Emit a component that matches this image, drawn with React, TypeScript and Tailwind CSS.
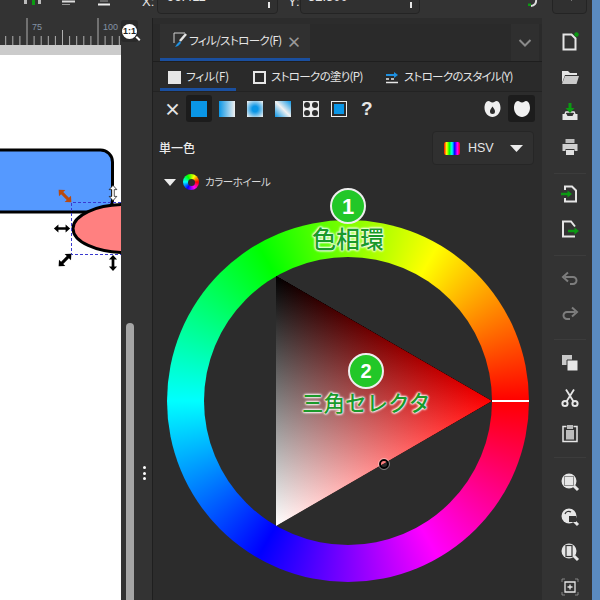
import React from "react";

const W = "#e6e6e6";

function Ico({ children }: { children: React.ReactNode }) {
  return (
    <svg width="20" height="20" viewBox="0 0 20 20" fill="none" stroke={W} strokeWidth="2">
      {children}
    </svg>
  );
}

const G = "#0b9a12";

const group1 = [
  <Ico key="new">
    <path d="M3.500 2.500h8l4 4v11h-12z" />
    <circle cx="16.500" cy="2.500" r="2.200" fill={G} stroke="none" />
  </Ico>,
  <Ico key="open">
    <path d="M2 4h6l2 2h7v2H5L2 16z" fill={W} stroke="none" />
    <path d="M5 9h14l-2.500 8H2z" fill={W} stroke="none" opacity="0.85" />
  </Ico>,
  <Ico key="save">
    <path d="M2.500 12h4l1 2h5l1-2h4v6h-15z" fill={W} stroke="none" />
    <path d="M5 12l1-2h8l1 2" strokeWidth="1.500" />
    <path d="M10 1v8" stroke={G} strokeWidth="3" />
    <path d="M5.500 6h9L10 11z" fill={G} stroke="none" />
  </Ico>,
  <Ico key="print">
    <path d="M5.500 2h9v4h-9z" fill="#bdbdbd" stroke="none" />
    <path d="M2.500 7h15v7h-3v-2h-9v2h-3z" fill="#cfcfcf" stroke="none" />
    <path d="M6 13h8v5H6z" fill="#e0e0e0" stroke="none" />
  </Ico>,
];
const group2 = [
  <Ico key="import">
    <path d="M5 6V2.500h7l4 4v11H5V14" />
    <path d="M1 10h9" stroke={G} strokeWidth="2.500" />
    <path d="M7.500 6.500v7L12 10z" fill={G} stroke="none" />
  </Ico>,
  <Ico key="export">
    <path d="M15 7.500l-4-5H3v15h12" />
    <path d="M8 12h9" stroke={G} strokeWidth="2.500" />
    <path d="M14.500 8.500v7l4.500-3.500z" fill={G} stroke="none" />
  </Ico>,
];
const Gy = "#7d7d7d";
const group3 = [
  <Ico key="undo">
    <path d="M5 8h8a3.500 3.500 0 0 1 0 7h-3" stroke={Gy} />
    <path d="M8 3.500L3 8l5 4.500" stroke={Gy} />
  </Ico>,
  <Ico key="redo">
    <path d="M15 8H7a3.500 3.500 0 0 0 0 7h3" stroke={Gy} />
    <path d="M12 3.500L17 8l-5 4.500" stroke={Gy} />
  </Ico>,
];
const group4 = [
  <Ico key="copy">
    <path d="M2 2h10v10H2z" fill="#c8c8c8" stroke="none" />
    <path d="M7 7h11v11H7z" fill={W} stroke="#333" strokeWidth="1" />
  </Ico>,
  <Ico key="cut">
    <path d="M6 1.500l7.500 12M14 1.500L6.500 13.500" strokeWidth="1.800" />
    <circle cx="5" cy="15.500" r="2.600" />
    <circle cx="15" cy="15.500" r="2.600" />
  </Ico>,
  <Ico key="paste">
    <path d="M6.500 3.500H3v15h14v-15h-3.500" strokeWidth="1.500" />
    <path d="M7 2h6v4H7z" fill="#bbb" stroke="none" />
    <path d="M6 7h8v9.500H6z" fill="#bbb" stroke="none" />
  </Ico>,
];
const Lens = ({ children }: { children?: React.ReactNode }) => (
  <svg width="20" height="20" viewBox="0 0 20 20" fill="none">
    <circle cx="9" cy="9" r="7.500" fill={W} />
    <path d="M14 14l4 4" stroke={W} strokeWidth="3" />
    {children}
  </svg>
);
const group5 = [
  <Lens key="z1">
    <rect x="4.500" y="4.500" width="9" height="9" fill="none" stroke="#333" strokeWidth="1" strokeDasharray="1 1" />
  </Lens>,
  <Lens key="z2">
    <path d="M9 9h7v6H9z" fill="#333" />
    <path d="M5 7a4 4 0 0 1 6-2" stroke="#333" strokeWidth="1.200" />
  </Lens>,
  <Lens key="z3">
    <rect x="6" y="3.500" width="6" height="11" fill={W} stroke="#333" strokeWidth="1.200" />
  </Lens>,
  <Ico key="z4">
    <path d="M5 5h10v10H5z" strokeWidth="1.300" />
    <path d="M10 7.500v5M7.500 10h5" strokeWidth="1.300" />
    <path d="M2 5V2h3M15 2h3v3M18 15v3h-3M5 18H2v-3" strokeWidth="0.800" stroke="#999" />
  </Ico>,
];

function Tool({ children }: { children: React.ReactNode }) {
  return <div className="flex h-[35px] w-full shrink-0 items-center justify-center">{children}</div>;
}

function RightBar() {
  return (
    <div className="flex h-full w-[50px] shrink-0 flex-col items-center overflow-hidden pl-[6px] pt-[6px]">
      {group1.map((g, i) => <Tool key={i}>{g}</Tool>)}
      <div className="mt-[9px] h-px w-[32px] shrink-0 bg-[#3c3c3c]" />
      <div className="mt-[2px]" />
      {group2.map((g, i) => <Tool key={i}>{g}</Tool>)}
      <div className="mt-[9px] h-px w-[32px] shrink-0 bg-[#3c3c3c]" />
      <div className="mt-[5px]" />
      {group3.map((g, i) => <Tool key={i}>{g}</Tool>)}
      <div className="mt-[8px] h-px w-[32px] shrink-0 bg-[#3c3c3c]" />
      <div className="mt-[5px]" />
      {group4.map((g, i) => <Tool key={i}>{g}</Tool>)}
      <div className="mt-[7px] h-px w-[32px] shrink-0 bg-[#3c3c3c]" />
      <div className="mt-[6px]" />
      {group5.map((g, i) => <Tool key={i}>{g}</Tool>)}
    </div>
  );
}

function Ruler() {
  const ticks: number[] = [];
  for (let i = -3; i < 14; i++) ticks.push(27 + i * 7.1);
  return (
    <svg width="121" height="27" viewBox="0 0 121 27" className="block shrink-0">
      {ticks.map((x, i) => {
        const k = i - 3;
        const h = k % 10 === 0 ? 27 : k % 5 === 0 ? 15 : 9;
        return <line key={i} x1={x} x2={x} y1={27 - h} y2={27} stroke="#b0b0b0" strokeWidth="1" />;
      })}
      <text x="32" y="12" fontSize="9" fill="#8494a6" fontFamily="Liberation Sans">75</text>
      <text x="103" y="12" fontSize="9" fill="#8494a6" fontFamily="Liberation Sans">100</text>
    </svg>
  );
}

const ARROW = "M-9 0l5-4.500v3h8v-3l5 4.500-5 4.500v-3h-8v3z";

function CanvasDrawing() {
  return (
    <svg width="121" height="545" viewBox="0 55 121 545" className="block">
      <rect x="-20" y="150" width="132.500" height="62" rx="12" fill="#5599ff" stroke="#000" strokeWidth="3" />
      <ellipse cx="125" cy="228.500" rx="52" ry="24" fill="#ff8080" stroke="#000" strokeWidth="3" />
      <path d="M121 202.500H71.500V254.500H121" fill="none" stroke="#3a3ad0" strokeWidth="1" strokeDasharray="3 2" />
      <path d={ARROW} fill="#b84a10" transform="translate(65 196) rotate(45)" />
      <path d={ARROW} fill="#fff" stroke="#000" strokeWidth="0.800" transform="translate(113 193) rotate(90) scale(0.85)" />
      <path d={ARROW} fill="#000" transform="translate(62 228.500) scale(0.9)" />
      <path d={ARROW} fill="#000" transform="translate(65 260) rotate(-45)" />
      <path d={ARROW} fill="#000" transform="translate(113 263) rotate(90) scale(0.9)" />
    </svg>
  );
}

const Check = ({ filled }: { filled?: boolean }) => (
  <div className={filled ? "h-[13px] w-[13px] shrink-0 bg-[#e6e6e6]" : "h-[13px] w-[13px] shrink-0 border-2 border-[#e6e6e6]"} />
);

function Panel() {
  return (
    <div className="flex h-full w-[390px] shrink-0 flex-col border-l border-[#1f1f1f] bg-[#2c2c2c] pt-[6px] [font-feature-settings:'palt']">
      <div className="flex h-[38px] shrink-0 border-b border-[#1e1e1e] bg-[#2a2a2a] pl-[7px] pr-[3px]">
        <div className="flex w-[150px] items-center border-b-[3px] border-[#1a4f9f] bg-[#303030] pl-[11px] text-[11.500px] text-[#e6e6e6]">
          <svg width="20" height="20" viewBox="0 0 20 20" fill="none" className="mr-[-2px] shrink-0">
            <path d="M3 12V2h11" stroke="#cfcfcf" strokeWidth="1" />
            <path d="M15 3L9 10" stroke="#e6e6e6" strokeWidth="2.500" />
            <path d="M9 10l-3 3-2 3 3-1 3-3z" fill="#1e90e0" />
          </svg>
          <span className="whitespace-nowrap tracking-[-0.6px]">フィル/ストローク(F)</span>
          <span className="ml-[5px] text-[15px] font-bold leading-none text-[#9a9a9a]">×</span>
        </div>
        <div className="flex-1" />
        <div className="flex w-[28px] items-center justify-center bg-[#2f2f2f]">
          <svg width="14" height="10" viewBox="0 0 14 10" fill="none">
            <path d="M1.500 2L7 7.500 12.500 2" stroke="#8a8a8a" strokeWidth="2" />
          </svg>
        </div>
      </div>
      <div className="flex h-[30px] shrink-0 items-stretch border-b border-[#232323] bg-[#2a2a2a] pl-[7px] pt-[4px] text-[11.500px] text-[#e6e6e6]">
        <div className="flex w-[76px] items-center gap-[5px] border-b-[3px] border-[#1a4f9f] pl-[8px]">
          <Check filled />
          <span className="whitespace-nowrap">フィル(F)</span>
        </div>
        <div className="ml-[17px] flex w-[116px] items-center gap-[5px] pb-[3px]">
          <Check />
          <span className="whitespace-nowrap tracking-[-0.7px]">ストロークの塗り(P)</span>
        </div>
        <div className="ml-[16px] flex items-center gap-[5px] pb-[3px]">
          <svg width="14" height="14" viewBox="0 0 14 14" fill="none" className="shrink-0">
            <path d="M1 5h9" stroke="#1e90e0" strokeWidth="2" />
            <path d="M9 2l4 3-4 3z" fill="#1e90e0" />
            <path d="M1 9h3M6 9h3" stroke="#e6e6e6" strokeWidth="1.500" />
            <path d="M1 12.500h12" stroke="#e6e6e6" strokeWidth="1.500" />
          </svg>
          <span className="whitespace-nowrap tracking-[-0.75px]">ストロークのスタイル(Y)</span>
        </div>
      </div>

      <div className="flex h-[33px] shrink-0 items-center pl-[11px] pr-[7px]">
        <span className="w-[22px] text-[17px] font-bold leading-none text-[#e6e6e6]">×</span>
        <div className="flex h-[27px] w-[26px] items-center justify-center rounded-[3px] bg-[#1c1c1c]">
          <div className="h-[16px] w-[16px] bg-[#0a96e6]" />
        </div>
        <div className="ml-[7px] h-[16px] w-[16px] bg-[linear-gradient(90deg,#0a96e6,#f0f0f0)]" />
        <div className="ml-[12px] h-[16px] w-[16px] bg-[radial-gradient(circle,#0a96e6_25%,#f0f0f0_95%)]" />
        <div className="ml-[12px] h-[16px] w-[16px] bg-[linear-gradient(45deg,#0a96e6,#f0f0f0_50%,#0a96e6)]" />
        <svg width="16" height="16" viewBox="0 0 16 16" className="ml-[12px]">
          <rect width="16" height="16" fill="#ececec" />
          <circle cx="4" cy="4" r="3" fill="#2c2c2c" />
          <circle cx="12" cy="4" r="3" fill="#2c2c2c" />
          <circle cx="4" cy="12" r="3" fill="#2c2c2c" />
          <circle cx="12" cy="12" r="3" fill="#2c2c2c" />
        </svg>
        <div className="ml-[12px] flex h-[16px] w-[16px] items-center justify-center border border-[#f0f0f0]">
          <div className="h-[10px] w-[10px] bg-[#0a96e6]" />
        </div>
        <span className="ml-[14px] font-['Liberation_Sans',sans-serif] text-[19px] font-bold leading-none text-[#e6e6e6]">?</span>
        <div className="flex-1" />
        <svg width="17" height="18" viewBox="0 0 16 18" className="mr-[7px]">
          <path fillRule="evenodd" d="M4 1C1 1 0 5 0 8c0 5 4 9 8 9s8-4 8-9c0-3-1-7-4-7-1.500 0-2 1.500-4 1.500S5.500 1 4 1zM8 6.500c-1.500 2-2.500 3.500-2.500 5a2.500 2.500 0 0 0 5 0c0-1.500-1-3-2.500-5z" fill="#f0f0f0" />
        </svg>
        <div className="flex h-[27px] w-[27px] items-center justify-center rounded-[3px] bg-[#1c1c1c]">
          <svg width="18" height="18" viewBox="0 0 16 18">
            <path d="M4 1C1 1 0 5 0 8c0 5 4 9 8 9s8-4 8-9c0-3-1-7-4-7-1.500 0-2 1.500-4 1.500S5.500 1 4 1z" fill="#f0f0f0" />
          </svg>
        </div>
      </div>

      <div className="flex shrink-0 items-center justify-between pl-[6px] pr-[8px] pt-[6px]">
        <span className="text-[12px] font-medium text-[#ececec]">単一色</span>
        <div className="flex h-[34px] w-[102px] items-center rounded-[4px] border border-[#262626] bg-[#303030] pl-[11px]">
          <div className="h-[13px] w-[16px] rounded-[2px] bg-[linear-gradient(90deg,#f00,#ff0,#0f0,#0ff,#00f,#f0f,#f00)]" />
          <span className="ml-[8px] w-[42px] font-['Liberation_Sans',sans-serif] text-[12.500px] text-[#e6e6e6]">HSV</span>
          <svg width="13" height="7" viewBox="0 0 13 7"><path d="M0 0h13L6.500 7z" fill="#ececec" /></svg>
        </div>
      </div>

      <div className="mt-[8px] flex h-[18px] shrink-0 items-center pl-[11px]">
        <svg width="12" height="7" viewBox="0 0 12 7"><path d="M0 0h12L6 7z" fill="#ececec" /></svg>
        <div className="ml-[7px] flex h-[16px] w-[16px] items-center justify-center rounded-full bg-[conic-gradient(from_90deg,#f00,#f0f,#00f,#0ff,#0f0,#ff0,#f00)]">
          <div className="h-[7px] w-[7px] rounded-full bg-[#2c2c2c]" />
        </div>
        <span className="ml-[6px] whitespace-nowrap text-[10.500px] tracking-[-0.5px] text-[#d8d8d8]">カラーホイール</span>
      </div>

      <div className="relative ml-[14px] mt-[29px] h-[362px] w-[362px] shrink-0 rounded-full bg-[conic-gradient(from_90deg,#f00,#f0f,#00f,#0ff,#0f0,#ff0,#f00)]">
        <div className="absolute inset-[37px] rounded-full bg-[#2c2c2c]" />
        <svg width="362" height="362" viewBox="167 220 362 362" className="absolute left-0 top-0 [isolation:isolate]">
          <defs>
            <linearGradient id="r" gradientUnits="userSpaceOnUse" x1="276" y1="0" x2="492" y2="0">
              <stop offset="0" stopColor="#000" />
              <stop offset="1" stopColor="#f00" />
            </linearGradient>
            <linearGradient id="w" gradientUnits="userSpaceOnUse" x1="276" y1="526" x2="384.400" y2="338.700">
              <stop offset="0" stopColor="#fff" />
              <stop offset="1" stopColor="#000" />
            </linearGradient>
          </defs>
          <polygon points="276,276 492,401 276,526" fill="#000" />
          <polygon points="276,276 492,401 276,526" fill="url(#r)" className="mix-blend-plus-lighter" />
          <polygon points="276,276 492,401 276,526" fill="url(#w)" className="mix-blend-plus-lighter" />
          <line x1="492" x2="529" y1="401" y2="401" stroke="#fff" strokeWidth="2" />
          <circle cx="384" cy="464" r="4" fill="none" stroke="#000" strokeWidth="2" />
          <circle cx="384" cy="464" r="5.500" fill="none" stroke="#fff" strokeOpacity="0.4" strokeWidth="1" />
        </svg>
        <div className="absolute left-[163px] top-[-32px] flex h-[36px] w-[36px] items-center justify-center rounded-full border-[2px] border-[#eeeeee] bg-[#22c728] font-['Liberation_Sans',sans-serif] text-[22px] font-bold text-white">1</div>
        <div className="absolute left-[145px] top-[0px] w-[72px] text-center text-[24px] font-medium leading-[36px] text-[#1a9a2a] [font-feature-settings:normal] [text-shadow:0_0_2px_#fff,0_0_2px_#fff,0_0_3px_#fff,0_0_3px_#fff]">色相環</div>
        <div className="absolute left-[181px] top-[133px] flex h-[36px] w-[36px] items-center justify-center rounded-full border-[2px] border-[#eeeeee] bg-[#22c728] font-['Liberation_Sans',sans-serif] text-[20px] font-bold text-white">2</div>
        <div className="absolute left-[135px] top-[164px] w-[128px] whitespace-nowrap text-[21.500px] font-medium leading-[36px] text-[#1a9a2a] [font-feature-settings:normal] [text-shadow:0_0_2px_#fff,0_0_2px_#fff,0_0_3px_#fff,0_0_3px_#fff]">三角セレクタ</div>
      </div>
    </div>
  );
}

function TopBar() {
  return (
    <div className="flex h-[18px] shrink-0 items-start overflow-hidden bg-[#333333]">
      <svg width="121" height="18" viewBox="0 0 121 18" className="shrink-0">
        <path d="M24 0h3v4h-3zM38 0h3v4h-3z" fill="#bbb" />
        <path d="M33.500 0v5" stroke="#0b9a12" strokeWidth="3" />
        <path d="M62 1.500h13" stroke="#ddd" strokeWidth="2" />
        <path d="M62 4.500h8" stroke="#999" strokeWidth="1" />
        <path d="M98 4.500h12" stroke="#eee" strokeWidth="2" />
        <path d="M100 1h8" stroke="#999" strokeWidth="1" />
      </svg>
      <span className="ml-[21px] mt-[-8px] w-[15px] font-['Liberation_Sans',sans-serif] text-[13px] text-[#e6e6e6]">X:</span>
      <div className="mt-[-16px] flex h-[30px] w-[121px] items-end justify-between rounded-[4px] border border-[#242424] bg-[#303030] pb-[10px] pl-[9px] pr-[7px] font-['Liberation_Sans',sans-serif] text-[13px] leading-none text-[#e6e6e6]">
        <span>96.411</span>
        <span className="mb-[-5px] h-[6px] w-[2px] bg-[#e6e6e6]" />
      </div>
      <span className="ml-[10px] mt-[-8px] w-[12px] font-['Liberation_Sans',sans-serif] text-[13px] text-[#e6e6e6]">Y:</span>
      <div className="mt-[-16px] flex h-[30px] w-[120px] items-end justify-between rounded-[4px] border border-[#242424] bg-[#303030] pb-[10px] pl-[7px] pr-[7px] font-['Liberation_Sans',sans-serif] text-[13px] leading-none text-[#e6e6e6]">
        <span>52.500</span>
        <span className="mb-[-5px] h-[6px] w-[2px] bg-[#e6e6e6]" />
      </div>
      <svg width="16" height="14" viewBox="0 0 16 14" fill="none" className="ml-[103px]">
        <path d="M13 0a5 5 0 0 1-5 6" stroke="#ddd" strokeWidth="2" />
        <path d="M5 3.500h3v2.500H5z" fill="#0b9a12" />
      </svg>
      <div className="ml-[13px] mt-[-16px] flex h-[30px] w-[35px] items-end justify-center rounded-[4px] border border-[#242424] bg-[#303030] pb-[12px]">
        <svg width="8" height="6" viewBox="0 0 8 6"><path d="M6 0v6L1 0z" fill="#ddd" /></svg>
      </div>
    </div>
  );
}

export default function App() {
  return (
    <div className="flex h-[600px] w-[600px] overflow-hidden bg-[#333333] font-['Noto_Sans_CJK_JP','Noto_Sans',sans-serif]">
      <div className="flex h-full w-[592px] shrink-0 flex-col">
        <TopBar />
        <div className="flex h-[582px] shrink-0">
          <div className="relative flex w-[121px] shrink-0 flex-col">
            <Ruler />
            <div className="h-[10px] shrink-0 bg-[#cbcbcb]" />
            <div className="flex-1 overflow-hidden bg-white">
              <CanvasDrawing />
            </div>
            <div className="absolute left-[121px] top-[2px] flex h-[22px] w-[17px] items-center justify-center rounded-[3px] bg-[#2a2a2a]">
              <div className="relative flex h-[15px] w-[15px] items-center justify-center rounded-full bg-white font-['Liberation_Sans',sans-serif] text-[9px] font-bold leading-none text-[#222]">
                1:1
                <span className="absolute bottom-[-2px] right-[-2px] h-[5px] w-[2px] -rotate-45 bg-white" />
              </div>
            </div>
          </div>
          <div className="flex w-[31px] shrink-0 pl-[5px]">
            <div className="mt-[305px] h-[277px] w-[8px] rounded-t-[4px] bg-[#a6a6a6]" />
            <div className="ml-[9px] mt-[448px] flex h-[14px] w-[3px] flex-col justify-between">
              <span className="h-[3px] w-[3px] rounded-full bg-white" />
              <span className="h-[3px] w-[3px] rounded-full bg-white" />
              <span className="h-[3px] w-[3px] rounded-full bg-white" />
            </div>
          </div>
          <Panel />
          <RightBar />
        </div>
      </div>
      <div className="h-full w-[8px] shrink-0 bg-[#5a8ac0]" />
    </div>
  );
}
